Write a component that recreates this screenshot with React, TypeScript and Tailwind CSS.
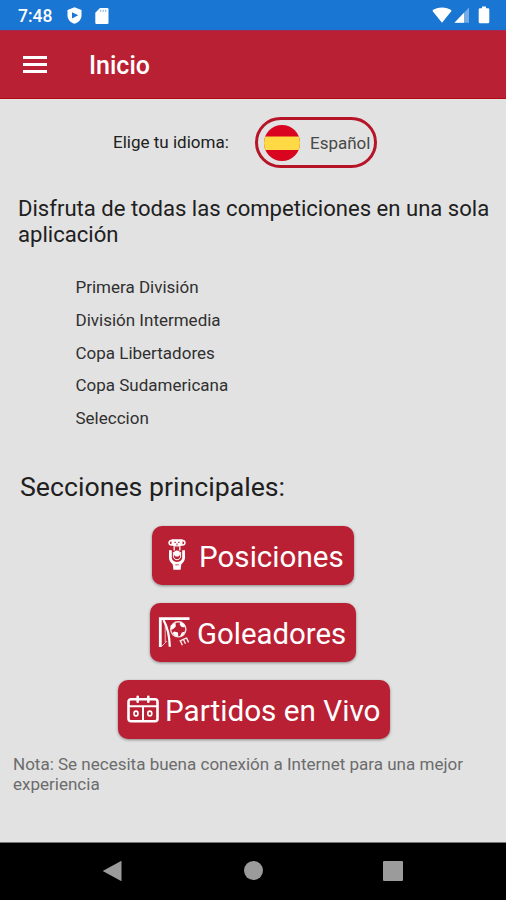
import React from 'react';

const competitions = [
  'Primera División',
  'División Intermedia',
  'Copa Libertadores',
  'Copa Sudamericana',
  'Seleccion',
];

function StatusBar() {
  return (
    <div className="flex h-[30px] items-center bg-[#1976d2] pl-[18px] text-white">
      <span className="w-[49px] pt-px text-[17.5px] leading-[30px] font-medium">7:48</span>
      <svg className="mt-px h-[17px] w-[15px]" viewBox="0 0 15 17" fill="currentColor">
        <path fillRule="evenodd" d="M7.5 0.3 L14.5 3 V8.5 C14.5 12.5 11.5 15.5 7.5 16.7 C3.5 15.5 0.5 12.5 0.5 8.5 V3 Z M5 5.2 V11.4 L11.2 8.3 Z" />
      </svg>
      <svg className="mt-px ml-[13px] h-[16px] w-[14px]" viewBox="0 0 14 16">
        <path fill="currentColor" d="M5 0 H12.4 Q13.5 0 13.5 1.2 V14.8 Q13.5 16 12.4 16 H1.4 Q0.3 16 0.3 14.8 V4.7 Z" />
        <path stroke="#1976d2" strokeOpacity="0.45" strokeWidth="1.2" d="M5.7 1.8 V4 M8.2 1.8 V4 M10.7 1.8 V4" />
      </svg>
      <div className="ml-auto flex items-center pr-[16px]">
        <svg className="h-[16px] w-[20px]" viewBox="0 0 20 16" fill="currentColor">
          <path d="M10 15.8 L0.3 3.8 C5.5 -0.6 14.5 -0.6 19.7 3.8 Z" />
        </svg>
        <svg className="ml-[2px] h-[16px] w-[16px]" viewBox="0 0 16 16" fill="currentColor">
          <path fillOpacity="0.4" d="M0.5 15.7 L15 0.6 V15.7 Z" />
          <path d="M0.5 15.7 L10 5.8 V15.7 Z" />
        </svg>
        <svg className="ml-[8px] h-[18px] w-[12px]" viewBox="0 0 12 18" fill="currentColor">
          <path d="M4 0.5 H8 V2.2 H10 Q11.3 2.2 11.3 3.5 V16 Q11.3 17.3 10 17.3 H2 Q0.7 17.3 0.7 16 V3.5 Q0.7 2.2 2 2.2 H4 Z" />
        </svg>
      </div>
    </div>
  );
}

function TrophyIcon() {
  return (
    <svg className="h-[34px] w-[18px]" viewBox="0 0 18 34" fill="none" stroke="currentColor">
      <path fill="currentColor" stroke="none" d="M3.5 1.2 H14.5 V6.8 L12.2 8.6 H5.8 L3.5 6.8 Z" />
      <circle cx="3.4" cy="4.7" r="2.3" strokeWidth="1.5" />
      <circle cx="14.6" cy="4.7" r="2.3" strokeWidth="1.5" />
      <path stroke="#ba2033" strokeWidth="1" d="M6.3 4.3 H8 M10 4.3 H11.7 M9 5.5 V7.5" />
      <path strokeWidth="1.3" d="M6.2 8.5 V12.5 M11.8 8.5 V12.5" />
      <circle cx="9" cy="15.5" r="3.1" fill="currentColor" stroke="none" />
      <path strokeWidth="2.8" d="M2.4 12.2 V20 Q2.6 23 6 25.5 M15.6 12.2 V20 Q15.4 23 12 25.5" />
      <path strokeWidth="1" d="M5.4 14 V19 Q6.3 21.8 9 21.8 Q11.7 21.8 12.6 19 V14" />
      <path fill="currentColor" stroke="none" d="M4.3 22.3 Q9 25.5 13.7 22.3 L12.6 31.7 H5.4 Z" />
      <path stroke="#ba2033" strokeWidth="0.8" d="M7.2 26.8 H10.8" />
    </svg>
  );
}

function GoalIcon() {
  return (
    <svg className="h-[32px] w-[32px]" viewBox="0 0 32 32" fill="none" stroke="currentColor">
      <path strokeWidth="2.8" d="M2.3 31 V2.6 H31.5" />
      <path strokeWidth="2.2" d="M5.5 4 C9.5 11 11.5 20 11.8 30.8" />
      <path strokeWidth="1" strokeOpacity="0.7" d="M7.2 8 V26 M4 30 L9 25" />
      <circle cx="20.3" cy="13.3" r="7.6" strokeWidth="1.4" strokeOpacity="0.85" />
      <path fill="currentColor" stroke="none" d="M12.6 9.5 L17.5 6.8 L17.8 10.5 L15 13.2 L12.8 13.5 Z M22.5 5.8 L27 9 L26.5 11.5 L23.2 10.8 L21.6 8.3 Z M23.8 16.4 L27.3 15.4 L24.5 19.8 L22.2 19.9 Z M16.2 15.6 L20 16.5 L20.2 20.6 L17 19.8 L14.6 17 Z" />
      <path strokeWidth="1.4" strokeOpacity="0.9" d="M22.3 24.6 L24.4 29.2 M25.4 23.2 L27.5 27.8 M28.5 21.8 L30.6 26.4 M21.6 25.2 L28.8 21.8" />
    </svg>
  );
}

function CalendarIcon() {
  return (
    <svg className="h-[28px] w-[32px]" viewBox="0 0 32 28" fill="none" stroke="currentColor">
      <rect x="1.5" y="4.3" width="29" height="22" rx="2.5" strokeWidth="2.6" />
      <path strokeWidth="2" d="M1.5 11.3 H30.5 M16 11.3 V26" />
      <path strokeWidth="2.6" strokeLinecap="round" d="M10.7 1.8 V6.8 M21.3 1.8 V6.8" />
      <ellipse cx="9" cy="18.5" rx="2" ry="2.4" strokeWidth="1.6" />
      <ellipse cx="22.8" cy="18.5" rx="2" ry="2.4" strokeWidth="1.6" />
    </svg>
  );
}

type SectionButtonProps = {
  className: string;
  icon: React.ReactNode;
  label: string;
};

function SectionButton({ className, icon, label }: SectionButtonProps) {
  return (
    <button
      className={`flex h-[59px] items-center rounded-[10px] bg-[#ba2033] whitespace-nowrap text-white shadow-[0_1px_3px_rgba(0,0,0,0.4)] ${className}`}
    >
      {icon}
      <span className="pt-[3px]">{label}</span>
    </button>
  );
}

export default function App() {
  return (
    <div className="flex h-[900px] w-[506px] flex-col overflow-hidden bg-[#e2e2e2] font-['Roboto',sans-serif] text-[#202020]">
      <StatusBar />

      <header className="flex h-[69px] items-center border-t border-b border-t-[#a32a55] border-b-[#b00a18] bg-[#ba2033] pl-[23px] text-white">
        <button className="flex w-[66px] flex-col gap-[4px]" aria-label="Menú">
          <span className="h-[3px] w-[24px] bg-white" />
          <span className="h-[3px] w-[24px] bg-white" />
          <span className="h-[3px] w-[24px] bg-white" />
        </button>
        <h1 className="pt-[3px] text-[25px] leading-[30px] font-medium">Inicio</h1>
      </header>

      <main className="flex flex-1 flex-col">
        <div className="mt-[18px] flex items-center pl-[113px]">
          <span className="w-[142px] pt-px text-[17.05px] whitespace-nowrap">Elige tu idioma:</span>
          <button className="flex h-[51px] w-[122px] items-center rounded-full border-[3px] border-[#b51526] pl-[6px]">
            <svg className="h-[36px] w-[36px] shrink-0 rounded-full" viewBox="0 0 36 36">
              <rect width="36" height="36" fill="#d9041f" />
              <rect y="11.5" width="36" height="13.5" fill="#ffda44" />
            </svg>
            <span className="ml-[10px] pt-[2px] text-[17px] text-[#484848]">Español</span>
          </button>
        </div>

        <p className="mt-[28px] pl-[18px] text-[22.08px] leading-[26px]">
          Disfruta de todas las competiciones en una sola
          <br />
          aplicación
        </p>

        <ul className="mt-[23px] pl-[75.5px] text-[17px] leading-[32.8px] text-[#303030]">
          {competitions.map((name) => (
            <li key={name}>{name}</li>
          ))}
        </ul>

        <h2 className="mt-[34px] pl-[20px] text-[26.7px] leading-[36px]">Secciones principales:</h2>

        <div className="mt-[21px] flex flex-col gap-[18px]">
          <SectionButton className="ml-[152px] w-[202px] gap-[13px] pl-[16px] text-[29.6px]" icon={<TrophyIcon />} label="Posiciones" />
          <SectionButton className="ml-[150px] w-[206px] gap-[7px] pl-[8px] text-[29.4px]" icon={<GoalIcon />} label="Goleadores" />
          <SectionButton className="ml-[118px] w-[272px] gap-[6px] pl-[9px] text-[29.7px]" icon={<CalendarIcon />} label="Partidos en Vivo" />
        </div>

        <p className="mt-[15px] pl-[13px] text-[17.03px] leading-[20px] text-[#6c6c6c]">
          Nota: Se necesita buena conexión a Internet para una mejor
          <br />
          experiencia
        </p>
      </main>

      <nav className="flex h-[58px] items-center border-t border-[#777] bg-black text-[#9b9b9b]">
        <svg className="mb-px ml-[102px] h-[22px] w-[20px]" viewBox="0 0 20 22" fill="currentColor">
          <path d="M0.7 11 L19.5 0.7 V21.3 Z" />
        </svg>
        <span className="mb-[2px] ml-[122px] h-[19px] w-[19px] rounded-full bg-[#9b9b9b]" />
        <span className="mb-px ml-[120px] h-[20px] w-[20px] rounded-[1px] bg-[#9b9b9b]" />
      </nav>
    </div>
  );
}
